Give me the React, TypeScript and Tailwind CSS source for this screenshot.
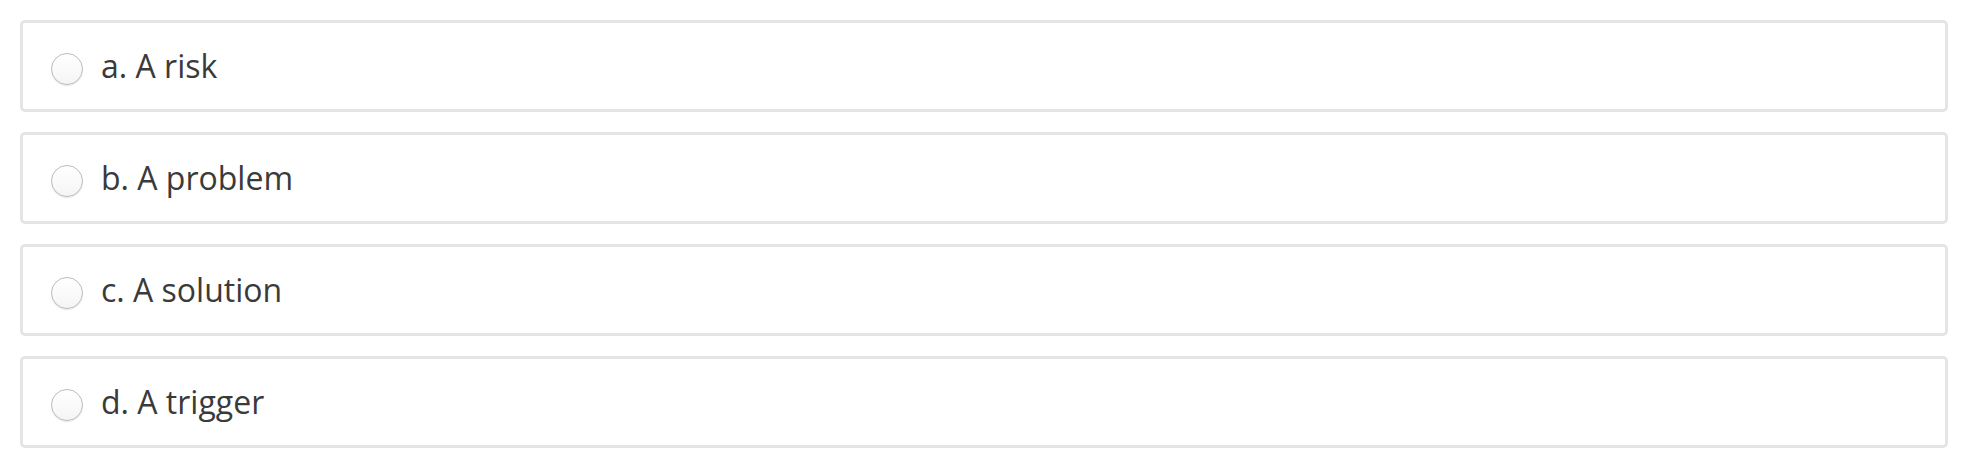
import React from "react";

const options = [
  { letter: "a.", label: "A risk" },
  { letter: "b.", label: "A problem" },
  { letter: "c.", label: "A solution" },
  { letter: "d.", label: "A trigger" },
];

function Radio() {
  return (
    <span className="mt-[7px] block h-[32px] w-[32px] shrink-0 rounded-full border border-[#bcbcbc] bg-gradient-to-b from-white to-[#f5f5f5] shadow-[0_1px_1px_rgba(0,0,0,0.1)]" />
  );
}

export default function App() {
  return (
    <div
      className="min-h-[464px] w-[1976px] bg-white pl-[20px] pt-[20px]"
      style={{ fontFamily: '"Open Sans", "Noto Sans", sans-serif' }}
    >
      <div className="flex w-[1928px] flex-col gap-[20px]">
        {options.map((o) => (
          <label
            key={o.letter}
            className="flex h-[92px] items-center gap-[18px] rounded-[5px] border-[3px] border-[#e4e4e4] pb-[1px] pl-[28px]"
          >
            <Radio />
            <span className="text-[32px] leading-[48px] text-[#3a3a3a]">
              {o.letter} {o.label}
            </span>
          </label>
        ))}
      </div>
    </div>
  );
}
